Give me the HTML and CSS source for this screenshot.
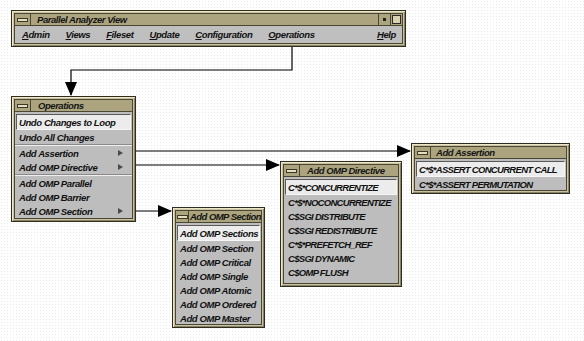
FILE: index.html
```html
<!DOCTYPE html>
<html lang="en">
<head>
    <meta charset="UTF-8">
    <title>Parallel Analyzer View - Operations</title>
    <link rel="stylesheet" href="styles.css">
</head>
<body>
    <div class="desk">
        <svg class="links" width="584" height="341" viewBox="0 0 584 341">
            <defs>
                <marker id="head" markerWidth="14" markerHeight="12" refX="13" refY="6" orient="auto" markerUnits="userSpaceOnUse">
                    <path d="M0,0 L14,6 L0,12 z" fill="#000"/>
                </marker>
            </defs>
            <polyline points="292,45 292,70 71,70 71,95" marker-end="url(#head)"/>
            <polyline points="128,151 410,151" marker-end="url(#head)"/>
            <polyline points="128,165 279,165" marker-end="url(#head)"/>
            <polyline points="128,211 171,211" marker-end="url(#head)"/>
        </svg>

        <!-- main window -->
        <div class="win main-win">
            <div class="frame">
                <div class="titlebar">
                    <span class="menu-btn"><i></i></span>
                    <span class="title">Parallel Analyzer View</span>
                    <span class="tb-btn min"><i></i></span>
                    <span class="tb-btn max"><i></i></span>
                </div>
                <div class="menubar">
                    <span><u>A</u>dmin</span>
                    <span><u>V</u>iews</span>
                    <span><u>F</u>ileset</span>
                    <span><u>U</u>pdate</span>
                    <span><u>C</u>onfiguration</span>
                    <span><u>O</u>perations</span>
                    <span class="help"><u>H</u>elp</span>
                </div>
            </div>
        </div>

        <!-- Operations menu -->
        <div class="win menu ops">
            <div class="frame">
                <div class="titlebar">
                    <span class="menu-btn"><i></i></span>
                    <span class="title">Operations</span>
                </div>
                <ul class="items">
                    <li class="active">Undo Changes to Loop</li>
                    <li>Undo All Changes</li>
                    <li class="sep"></li>
                    <li class="cascade">Add Assertion</li>
                    <li class="cascade">Add OMP Directive</li>
                    <li class="sep"></li>
                    <li>Add OMP Parallel</li>
                    <li>Add OMP Barrier</li>
                    <li class="cascade">Add OMP Section</li>
                </ul>
            </div>
        </div>

        <!-- Add OMP Section -->
        <div class="win menu section">
            <div class="frame">
                <div class="titlebar">
                    <span class="menu-btn"><i></i></span>
                    <span class="title">Add OMP Section</span>
                </div>
                <ul class="items">
                    <li class="active">Add OMP Sections</li>
                    <li>Add OMP Section</li>
                    <li>Add OMP Critical</li>
                    <li>Add OMP Single</li>
                    <li>Add OMP Atomic</li>
                    <li>Add OMP Ordered</li>
                    <li>Add OMP Master</li>
                </ul>
            </div>
        </div>

        <!-- Add OMP Directive -->
        <div class="win menu directive">
            <div class="frame">
                <div class="titlebar">
                    <span class="menu-btn"><i></i></span>
                    <span class="title">Add OMP Directive</span>
                </div>
                <ul class="items caps">
                    <li class="active">C*$*CONCURRENTIZE</li>
                    <li>C*$*NOCONCURRENTIZE</li>
                    <li>C$SGI DISTRIBUTE</li>
                    <li>C$SGI REDISTRIBUTE</li>
                    <li>C*$*PREFETCH_REF</li>
                    <li>C$SGI DYNAMIC</li>
                    <li>C$OMP FLUSH</li>
                </ul>
            </div>
        </div>

        <!-- Add Assertion -->
        <div class="win menu assertion">
            <div class="frame">
                <div class="titlebar">
                    <span class="menu-btn"><i></i></span>
                    <span class="title">Add Assertion</span>
                </div>
                <ul class="items caps">
                    <li class="active">C*$*ASSERT CONCURRENT CALL</li>
                    <li>C*$*ASSERT PERMUTATION</li>
                </ul>
            </div>
        </div>
    </div>
</body>
</html>
```

FILE: styles.css
```css
body {
    margin: 0;
    background: #fff;
    font-family: "Liberation Sans", Arial, sans-serif;
}
.desk {
    position: relative;
    width: 584px;
    height: 341px;
    overflow: hidden;
    background-image: radial-gradient(circle, #ebebeb 0.5px, transparent 0.9px);
    background-size: 3px 3px;
}
.links {
    position: absolute;
    left: 0;
    top: 0;
}
.links polyline {
    fill: none;
    stroke: #000;
    stroke-width: 1.2;
}

/* window frames */
.win {
    position: absolute;
    box-sizing: border-box;
    display: flex;
    background: #c8c2a0;
    border: 1px solid #2f2c20;
    padding: 2px;
    box-shadow: inset 1px 1px 0 #ece6c6, inset -1px -1px 0 #8a8466;
}
.frame {
    flex: 1;
    display: flex;
    flex-direction: column;
    border: 1px solid #4a4634;
    background: #bdbdbd;
    overflow: hidden;
}
.titlebar {
    display: flex;
    align-items: center;
    height: 11px;
    background: #aba47f;
    border-bottom: 1px solid #4a4634;
    font-size: 9.5px;
    font-weight: bold;
    font-style: italic;
    letter-spacing: -0.45px;
    color: #141414;
}
.menu-btn {
    display: flex;
    align-items: center;
    justify-content: center;
    width: 15px;
    height: 100%;
    border-right: 1px solid #4a4634;
    flex-shrink: 0;
}
.menu-btn i {
    display: block;
    width: 9px;
    height: 2px;
    background: #e4dec0;
    border: 1px solid #3c3828;
}
.title {
    flex: 1;
    padding-left: 7px;
    white-space: nowrap;
    overflow: hidden;
}
.tb-btn {
    display: flex;
    align-items: center;
    justify-content: center;
    width: 11px;
    height: 100%;
    border-left: 1px solid #4a4634;
}
.tb-btn.min i {
    width: 3px;
    height: 3px;
    background: #222;
}
.tb-btn.max i {
    width: 7px;
    height: 7px;
    border: 1px solid #2a2a2a;
    background: #d8d2b0;
}

/* main window */
.main-win {
    left: 11px;
    top: 10px;
    width: 395px;
    height: 37px;
}
.main-win .title {
    padding-left: 6px;
}
.menubar {
    flex: 1;
    display: flex;
    align-items: center;
    gap: 16px;
    padding-left: 7px;
    padding-right: 6px;
    background: #bfbfbf;
    font-size: 9.5px;
    font-weight: bold;
    font-style: italic;
    letter-spacing: -0.4px;
    color: #111;
}
.menubar .help {
    margin-left: auto;
}

/* popup menus */
.items {
    list-style: none;
    margin: 0;
    padding: 2px 1px;
    font-size: 9.5px;
    font-weight: bold;
    font-style: italic;
    letter-spacing: -0.4px;
    color: #111;
}
.items.caps {
    letter-spacing: -0.7px;
}
.items li {
    display: flex;
    align-items: center;
    justify-content: space-between;
    height: 14px;
    padding: 0 8px 0 3px;
    white-space: nowrap;
}
.items li.active {
    background: #ececec;
    border: 1px solid;
    border-color: #5a5a5a #f6f6f6 #f6f6f6 #5a5a5a;
    padding-left: 2px;
}
.items li.sep {
    height: 0;
    padding: 0;
    margin: 0 -1px;
    border-top: 1px solid #8a8a8a;
    border-bottom: 1px solid #efefef;
}
.items li.cascade::after {
    content: "";
    border-left: 5px solid #4a4a4a;
    border-top: 3px solid transparent;
    border-bottom: 3px solid transparent;
}

.ops {
    left: 11px;
    top: 96px;
    width: 125px;
    height: 126px;
}
.section {
    left: 172px;
    top: 207px;
    width: 93px;
    height: 121px;
}
.section .menu-btn {
    width: 12px;
}
.section .title {
    padding-left: 1px;
    letter-spacing: -0.55px;
}
.directive {
    left: 280px;
    top: 161px;
    width: 122px;
    height: 126px;
}
.assertion {
    left: 411px;
    top: 143px;
    width: 159px;
    height: 51px;
}
.assertion .title {
    padding-left: 5px;
}
```
